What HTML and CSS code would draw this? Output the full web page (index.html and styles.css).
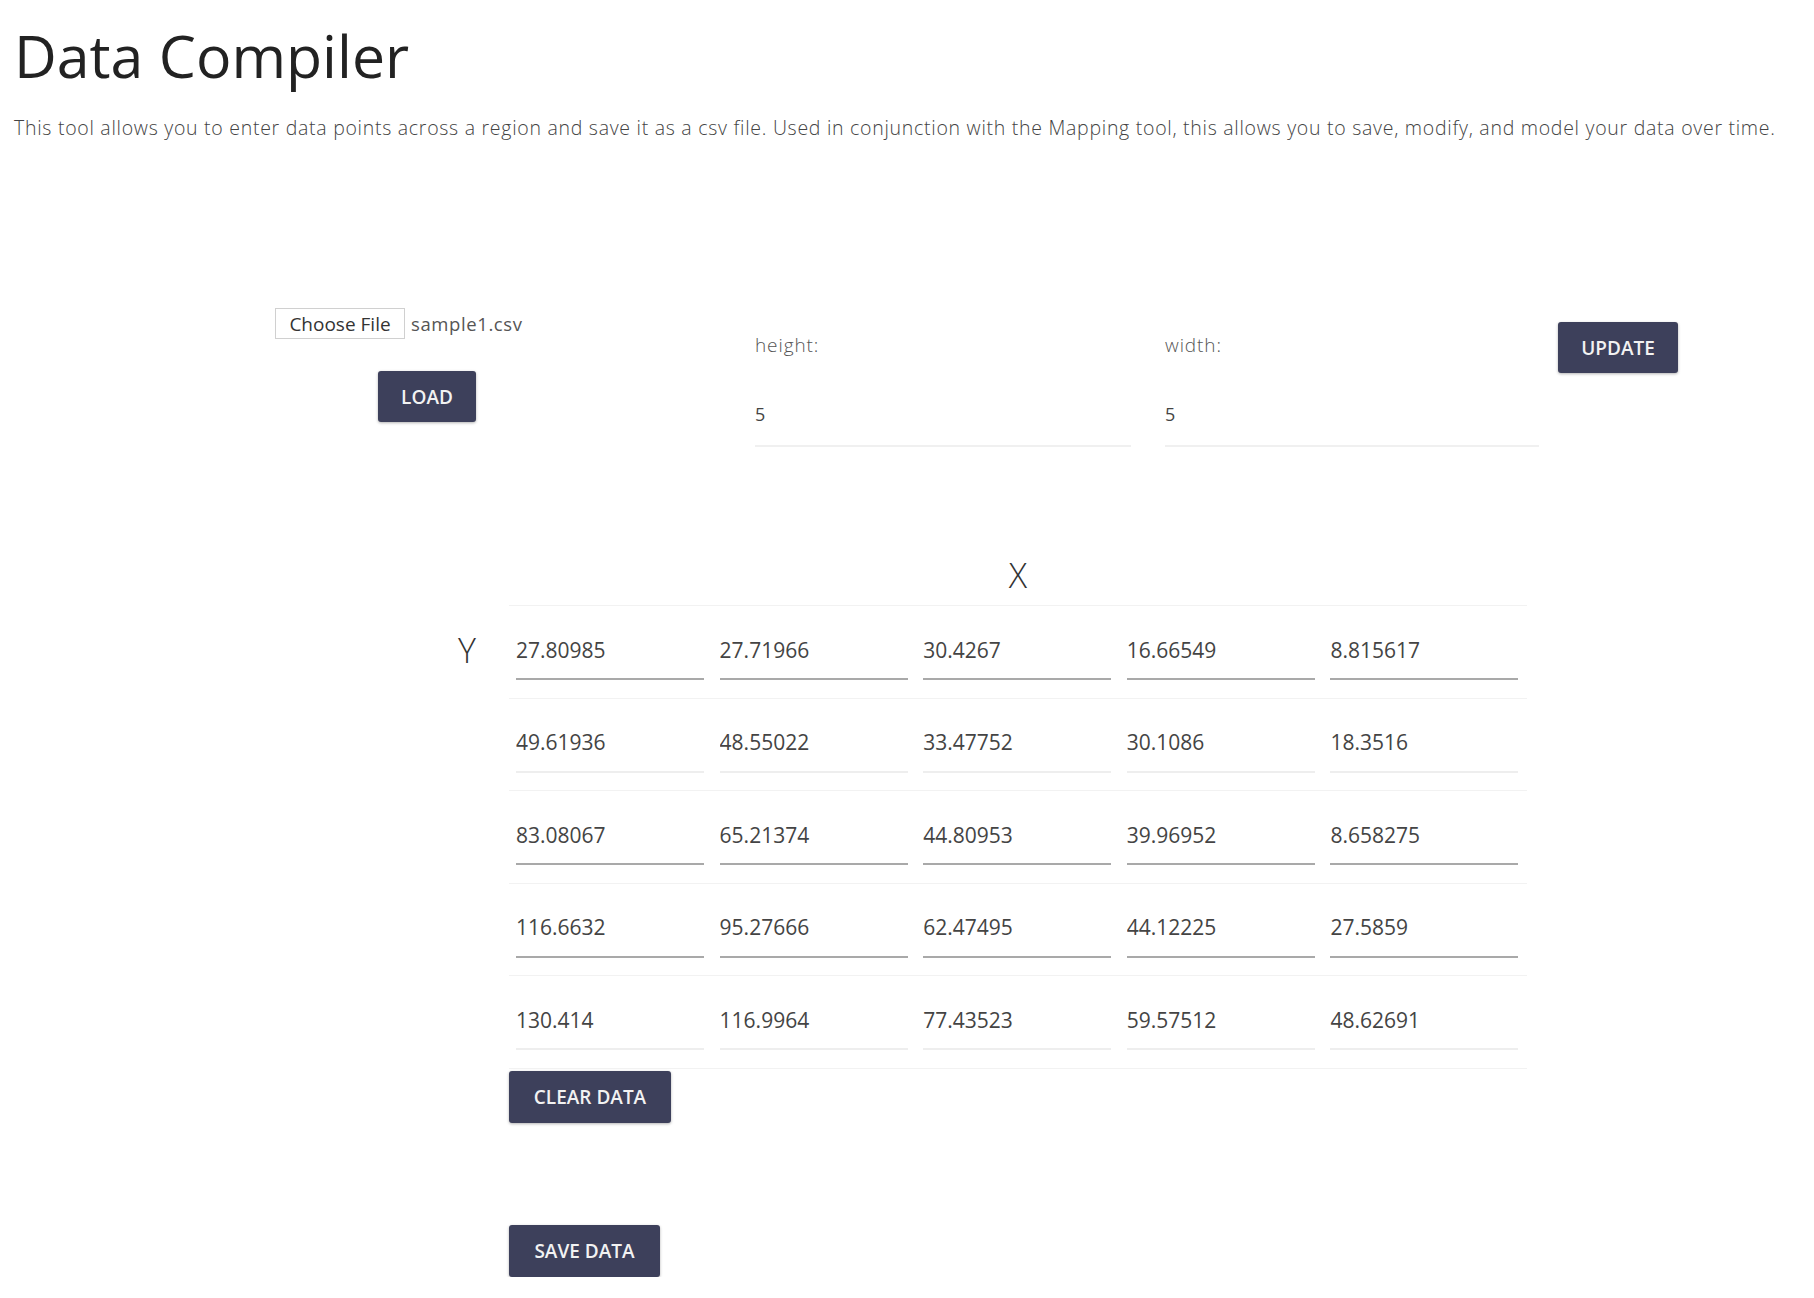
FILE: index.html
```html
<!DOCTYPE html>
<html lang="en">
<head>
<meta charset="utf-8">
<title>Data Compiler</title>
<link rel="stylesheet" href="styles.css">
</head>
<body>
<header class="page-header">
  <h1 class="title">Data Compiler</h1>
  <p class="lead">This tool allows you to enter data points across a region and save it as a csv file. Used in conjunction with the Mapping tool, this allows you to save, modify, and model your data over time.</p>
</header>

<section class="controls">
  <div class="file-col">
    <div class="file-row">
      <span class="file-btn">Choose File</span>
      <span class="file-name">sample1.csv</span>
    </div>
    <button class="btn btn-load">LOAD</button>
  </div>
  <div class="dim-col dim-height">
    <label class="dim-label">height:</label>
    <input class="dim-input" type="text" value="5">
  </div>
  <div class="dim-col dim-width">
    <label class="dim-label">width:</label>
    <input class="dim-input" type="text" value="5">
  </div>
  <div class="update-col">
    <button class="btn btn-update">UPDATE</button>
  </div>
</section>

<section class="compiler">
  <div class="axis-x">X</div>
  <div class="axis-y">Y</div>
  <div class="grid-area">
    <table class="data-table">
      <tbody>
        <tr class="row-dark">
          <td><input class="cell" type="text" value="27.80985"></td>
          <td><input class="cell" type="text" value="27.71966"></td>
          <td><input class="cell" type="text" value="30.4267"></td>
          <td><input class="cell" type="text" value="16.66549"></td>
          <td><input class="cell" type="text" value="8.815617"></td>
        </tr>
        <tr class="row-light">
          <td><input class="cell" type="text" value="49.61936"></td>
          <td><input class="cell" type="text" value="48.55022"></td>
          <td><input class="cell" type="text" value="33.47752"></td>
          <td><input class="cell" type="text" value="30.1086"></td>
          <td><input class="cell" type="text" value="18.3516"></td>
        </tr>
        <tr class="row-dark">
          <td><input class="cell" type="text" value="83.08067"></td>
          <td><input class="cell" type="text" value="65.21374"></td>
          <td><input class="cell" type="text" value="44.80953"></td>
          <td><input class="cell" type="text" value="39.96952"></td>
          <td><input class="cell" type="text" value="8.658275"></td>
        </tr>
        <tr class="row-dark">
          <td><input class="cell" type="text" value="116.6632"></td>
          <td><input class="cell" type="text" value="95.27666"></td>
          <td><input class="cell" type="text" value="62.47495"></td>
          <td><input class="cell" type="text" value="44.12225"></td>
          <td><input class="cell" type="text" value="27.5859"></td>
        </tr>
        <tr class="row-light">
          <td><input class="cell" type="text" value="130.414"></td>
          <td><input class="cell" type="text" value="116.9964"></td>
          <td><input class="cell" type="text" value="77.43523"></td>
          <td><input class="cell" type="text" value="59.57512"></td>
          <td><input class="cell" type="text" value="48.62691"></td>
        </tr>
      </tbody>
    </table>
    <button class="btn btn-clear">CLEAR DATA</button>
    <button class="btn btn-save">SAVE DATA</button>
  </div>
</section>
</body>
</html>
```

FILE: styles.css
```css
* {
  box-sizing: border-box;
}

html, body {
  margin: 0;
  padding: 0;
  background: #ffffff;
}

body {
  font-family: "Open Sans", "Noto Sans", sans-serif;
  color: #333;
  width: 1814px;
}

.page-header {
  padding-left: 14px;
}

.title {
  margin: 20px 0 0;
  font-size: 59px;
  line-height: 70px;
  font-weight: 400;
  color: #222;
}

.lead {
  margin: 26px 0 0;
  font-size: 19.5px;
  line-height: 24px;
  font-weight: 300;
  letter-spacing: 0.72px;
  color: #444;
  white-space: nowrap;
}

/* top controls */
.controls {
  display: flex;
  align-items: flex-start;
  margin-top: 168px;
  padding-left: 275px;
}

.file-col {
  width: 480px;
}

.file-row {
  display: flex;
  align-items: center;
  height: 31px;
}

.file-btn {
  display: inline-flex;
  align-items: center;
  justify-content: center;
  width: 130px;
  height: 31px;
  border: 1px solid #d0d0d0;
  background: #fff;
  font-size: 19px;
  color: #333;
}

.file-name {
  margin-left: 6px;
  font-size: 18.5px;
  letter-spacing: 0.6px;
  color: #555;
}

.btn {
  display: block;
  height: 51px;
  padding: 0;
  border: none;
  border-radius: 3px;
  background: #3d405b;
  color: #f2f2f2;
  font-family: "Open Sans", "Noto Sans", sans-serif;
  font-size: 19px;
  font-weight: 600;
  box-shadow: 0 1px 3px rgba(0, 0, 0, 0.3);
}

.btn-load {
  margin-top: 32px;
  margin-left: 103px;
  width: 98px;
}

.dim-col {
  padding-top: 25px;
}

.dim-height {
  width: 410px;
}

.dim-width {
  width: 393px;
}

.dim-label {
  display: block;
  font-size: 19px;
  line-height: 24px;
  font-weight: 300;
  letter-spacing: 0.9px;
  color: #555;
}

.dim-input {
  display: block;
  margin-top: 37px;
  height: 53px;
  padding: 0 0 11px 0;
  border: none;
  border-bottom: 2px solid #f0f0f0;
  font-family: "Open Sans", "Noto Sans", sans-serif;
  font-size: 18px;
  color: #444;
  outline: none;
  background: transparent;
}

.dim-height .dim-input {
  width: 376px;
}

.dim-width .dim-input {
  width: 374px;
}

.btn-update {
  margin-top: 14px;
  width: 120px;
}

/* data grid */
.compiler {
  display: grid;
  grid-template-columns: 51px 1018px;
  margin-top: 108px;
  margin-left: 458px;
}

.axis-x {
  grid-column: 2;
  grid-row: 1;
  text-align: center;
  font-size: 34px;
  line-height: 40px;
  font-weight: 300;
  color: #333;
  margin-bottom: 10px;
}

.axis-y {
  grid-column: 1;
  grid-row: 2;
  font-size: 34px;
  line-height: 40px;
  font-weight: 300;
  color: #333;
  padding-top: 25px;
}

.grid-area {
  grid-column: 2;
  grid-row: 2;
}

.data-table {
  width: 1018px;
  border-collapse: collapse;
  table-layout: fixed;
}

.data-table td {
  padding: 15px 7px 17px;
  border-top: 1px solid #f2f2f2;
  border-bottom: 1px solid #f2f2f2;
  height: 92.5px;
}

.cell {
  display: block;
  width: 188px;
  height: 59px;
  padding: 0;
  border: none;
  border-bottom: 2px solid #eeeeee;
  font-family: "Open Sans", "Noto Sans", sans-serif;
  font-size: 21px;
  color: #444;
  background: transparent;
  outline: none;
}

.row-dark .cell {
  border-bottom-color: #a9a9a9;
}

.btn-clear {
  margin-top: 2px;
  width: 162px;
  height: 52px;
}

.btn-save {
  margin-top: 102px;
  width: 151px;
  height: 52px;
}
```
